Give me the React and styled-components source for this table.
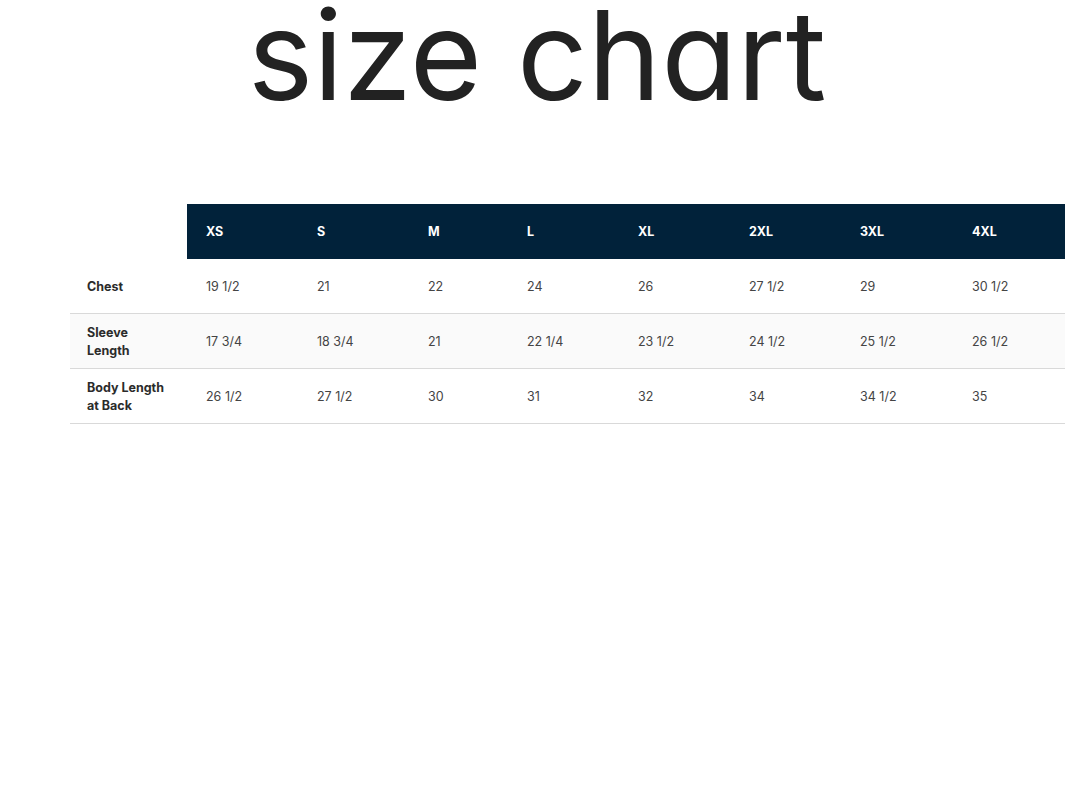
import React from "react";
import styled, { createGlobalStyle } from "styled-components";

const GlobalStyle = createGlobalStyle`
  html, body {
    margin: 0;
    padding: 0;
    background: #fff;
  }
  body {
    font-family: Inter, "Noto Sans", sans-serif;
  }
`;

const Page = styled.div`
  width: 1080px;
  height: 793px;
  display: flex;
  flex-direction: column;
  align-items: center;
`;

const Title = styled.h1`
  margin: 0;
  font-family: Inter, sans-serif;
  font-feature-settings: "cv11" 1;
  font-weight: 400;
  font-size: 124px;
  line-height: 110px;
  letter-spacing: 0;
  color: #222;
  padding-right: 6px;
`;

const COLS = "117px 111px 111px 99px 111px 111px 111px 112px 112px";

const Table = styled.div`
  width: 995px;
  margin-top: 94px;
  align-self: flex-start;
  margin-left: 70px;
`;

const Row = styled.div`
  display: grid;
  grid-template-columns: ${COLS};
  height: 55px;
  background: ${(p) => (p.$shade ? "#fafafa" : "transparent")};
  border-bottom: ${(p) => (p.$head ? "none" : "1px solid #d9d9d9")};
  box-sizing: border-box;
`;

const Cell = styled.div`
  display: flex;
  align-items: center;
  padding-left: ${(p) => (p.$label ? "17px" : "19px")};
  padding-top: 2px;
  font-size: 12.5px;
  line-height: 18px;
  color: ${(p) => (p.$label ? "#2b2b2b" : "#444")};
  font-weight: ${(p) => (p.$label ? 700 : 400)};
`;

const HeadCell = styled.div`
  display: flex;
  align-items: center;
  padding-left: 19px;
  background: ${(p) => (p.$blank ? "transparent" : "#01223a")};
  color: #fff;
  font-size: 12.5px;
  font-weight: 700;
`;

const sizes = ["XS", "S", "M", "L", "XL", "2XL", "3XL", "4XL"];

const rows = [
  { label: ["Chest"], values: ["19 1/2", "21", "22", "24", "26", "27 1/2", "29", "30 1/2"] },
  { label: ["Sleeve", "Length"], values: ["17 3/4", "18 3/4", "21", "22 1/4", "23 1/2", "24 1/2", "25 1/2", "26 1/2"], shade: true },
  { label: ["Body Length", "at Back"], values: ["26 1/2", "27 1/2", "30", "31", "32", "34", "34 1/2", "35"] },
];

export default function App() {
  return (
    <>
      <GlobalStyle />
      <Page>
        <Title>size chart</Title>
        <Table>
          <Row $head>
            <HeadCell $blank />
            {sizes.map((s) => (
              <HeadCell key={s}>{s}</HeadCell>
            ))}
          </Row>
          {rows.map((r) => (
            <Row key={r.label.join(" ")} $shade={r.shade}>
              <Cell $label>
                <div>
                  {r.label.map((l, i) => (
                    <div key={i}>{l}</div>
                  ))}
                </div>
              </Cell>
              {r.values.map((v, i) => (
                <Cell key={i}>{v}</Cell>
              ))}
            </Row>
          ))}
        </Table>
      </Page>
    </>
  );
}
